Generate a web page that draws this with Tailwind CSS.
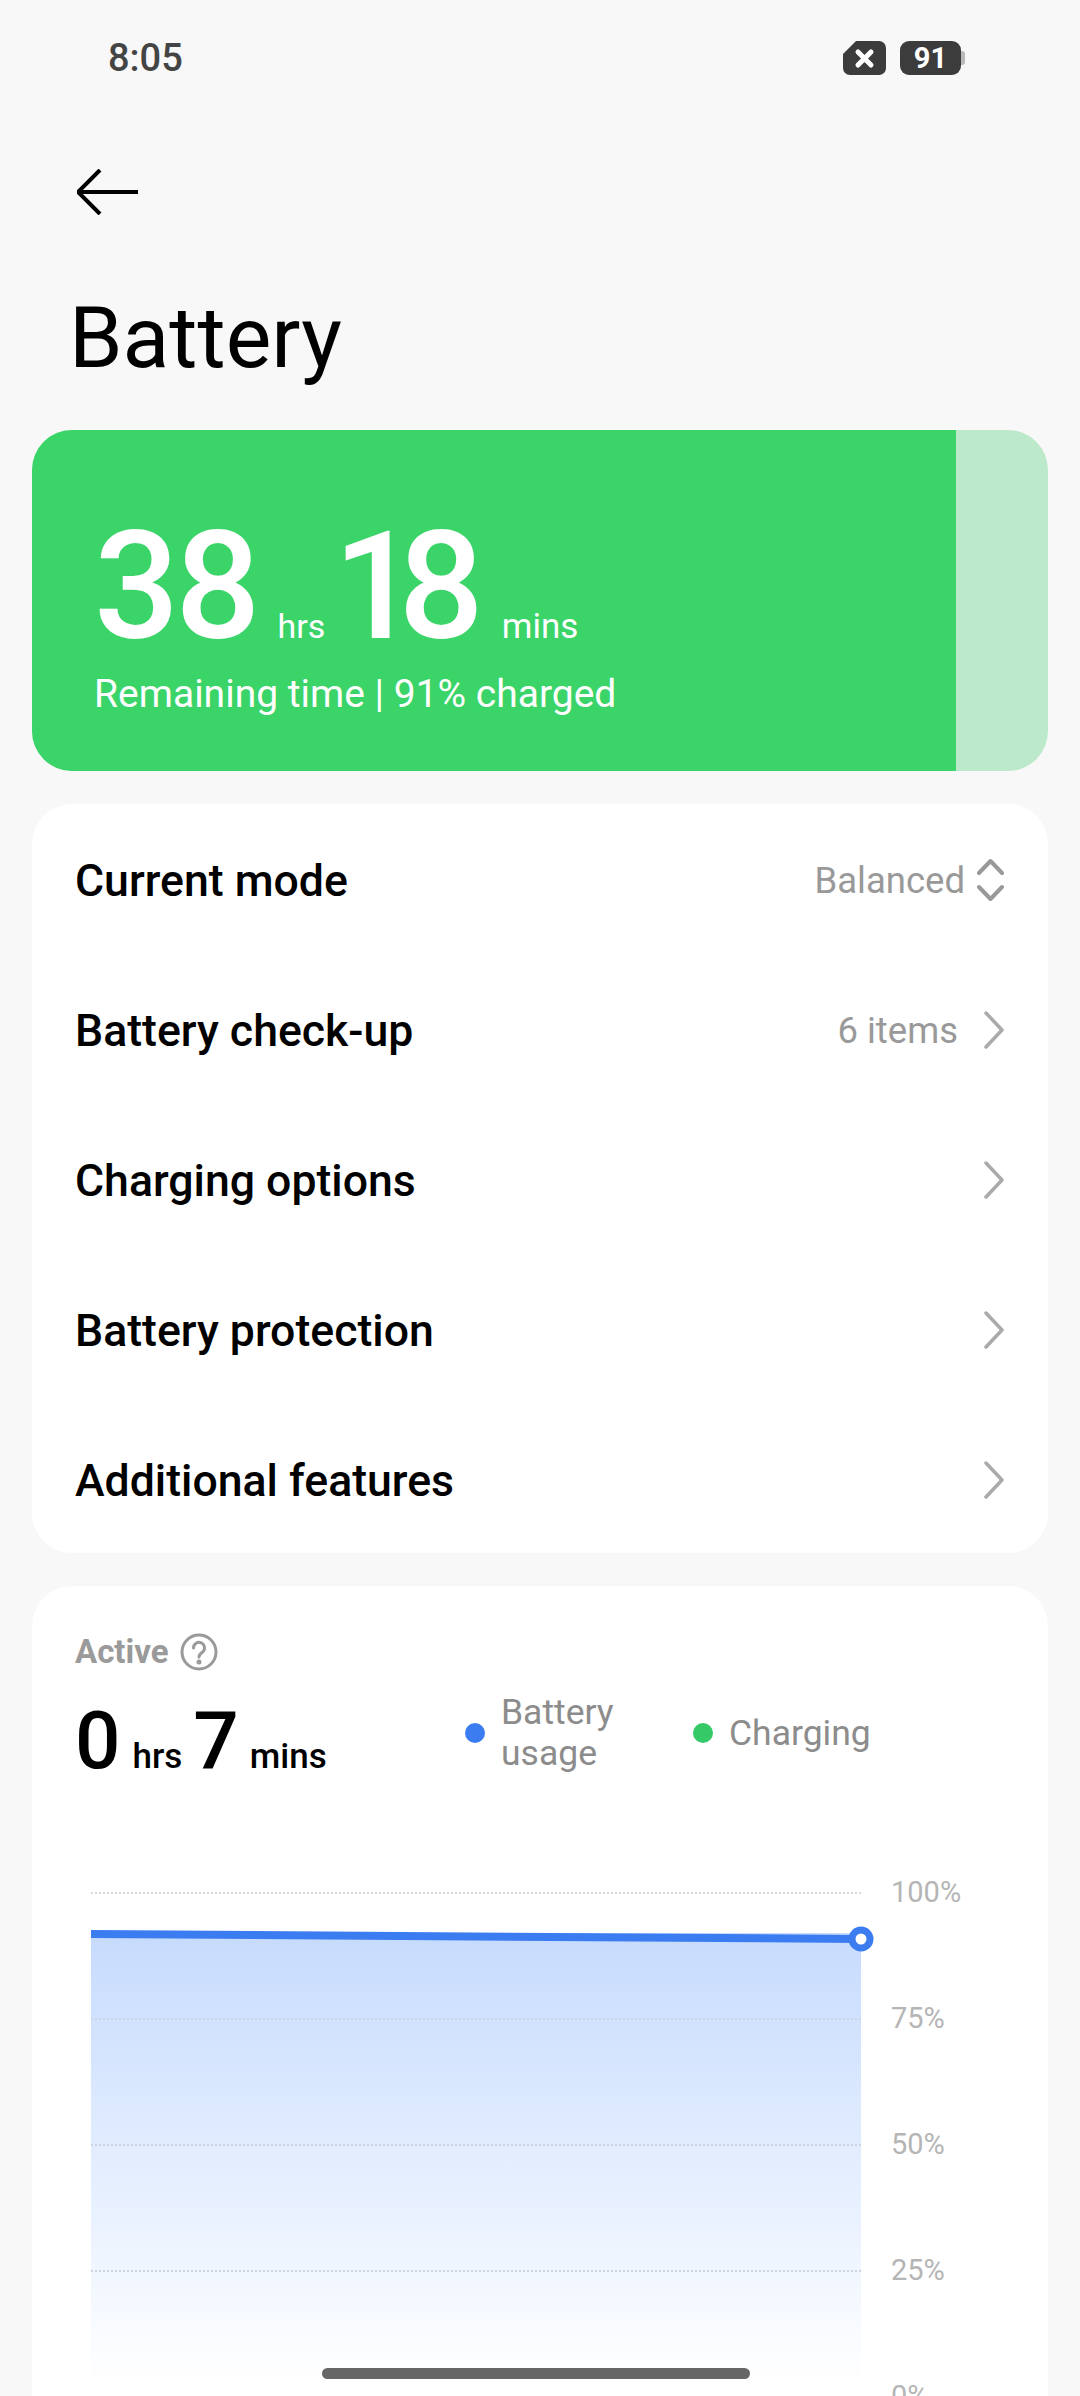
<!DOCTYPE html>
<html><head><meta charset="utf-8"><script src="https://cdn.jsdelivr.net/npm/@tailwindcss/browser@4"></script></head>
<body class="m-0">
<div class="w-[1080px] h-[2396px] overflow-hidden relative bg-[#f8f8f8] font-['Roboto',sans-serif]">
  <div class="h-[116px] flex items-center justify-between pl-[108px] pr-[115px]">
    <span class="text-[38px] leading-[44px] text-[#444] font-medium">8:05</span>
    <div class="flex items-center gap-[14px]">
      <svg class="w-[43px] h-[34px]" viewBox="0 0 43 34"><path d="M13 0H36a7 7 0 0 1 7 7V27a7 7 0 0 1-7 7H7a7 7 0 0 1-7-7V13z" fill="#3c3c3c"/><path d="M15 11L28 24M28 11L15 24" stroke="#fff" stroke-width="5" stroke-linecap="round"/></svg>
      <div class="flex items-center">
        <div class="w-[61px] h-[34px] rounded-[9px] bg-[#3c3c3c] text-white text-[29px] font-bold leading-[34px] text-center">91</div>
        <div class="w-[4px] h-[14px] rounded-r-[3px] bg-[#b9b9b9]"></div>
      </div>
    </div>
  </div>
  <div class="h-[152px] pl-[77px] flex items-center">
    <svg class="w-[62px] h-[46px]" viewBox="0 0 62 46"><path d="M1 23H61M23 1L1 23L23 45" fill="none" stroke="#000" stroke-width="4"/></svg>
  </div>
  <h1 class="h-[162px] pl-[69px] text-[86px] leading-[140px] text-black font-normal">Battery</h1>
  <div class="mx-[32px] h-[341px] rounded-[40px] bg-[#bde9cb] overflow-hidden">
    <div class="w-[924px] h-full bg-[#3ad469] pl-[62px] pt-[83px] text-white">
      <div class="flex items-baseline h-[148px]">
        <span class="text-[150px] leading-[148px] font-medium tracking-[-4px]">38</span>
        <span class="text-[34px] ml-[21px]">hrs</span>
        <span class="text-[150px] leading-[148px] font-medium tracking-[-20px] ml-[8px]">18</span>
        <span class="text-[35px] ml-[38px]">mins</span>
      </div>
      <div class="text-[39px] leading-[48px] mt-[9px]">Remaining time | 91% charged</div>
    </div>
  </div>
  <div class="mx-[32px] mt-[33px] h-[749px] rounded-[40px] bg-white pl-[43px] pr-[44px] pt-[1px] text-black text-[44.6px] font-medium">
    <div class="h-[150px] flex items-center justify-between">
      <span class="pt-[2px]">Current mode</span>
      <div class="flex items-center gap-[12px] text-[36.5px] font-normal text-[#999]"><span class="pt-[2px]">Balanced</span>
        <svg class="w-[27px] h-[44px]" viewBox="0 0 27 44" fill="none" stroke="#999" stroke-width="4" stroke-linecap="round" stroke-linejoin="round"><path d="M2 15L13.5 3L25 15M2 29L13.5 41L25 29"/></svg>
      </div>
    </div>
    <div class="h-[150px] flex items-center justify-between">
      <span class="pt-[2px]">Battery check-up</span>
      <div class="flex items-center gap-[26px] text-[36.5px] font-normal text-[#999]"><span class="pt-[2px]">6 items</span>
        <svg class="w-[20px] h-[38px]" viewBox="0 0 20 38" fill="none" stroke="#aaa" stroke-width="3.5" stroke-linecap="round" stroke-linejoin="round"><path d="M2 2L18 19L2 36"/></svg>
      </div>
    </div>
    <div class="h-[150px] flex items-center justify-between">
      <span class="pt-[2px]">Charging options</span>
      <svg class="w-[20px] h-[38px]" viewBox="0 0 20 38" fill="none" stroke="#aaa" stroke-width="3.5" stroke-linecap="round" stroke-linejoin="round"><path d="M2 2L18 19L2 36"/></svg>
    </div>
    <div class="h-[150px] flex items-center justify-between">
      <span class="pt-[2px]">Battery protection</span>
      <svg class="w-[20px] h-[38px]" viewBox="0 0 20 38" fill="none" stroke="#aaa" stroke-width="3.5" stroke-linecap="round" stroke-linejoin="round"><path d="M2 2L18 19L2 36"/></svg>
    </div>
    <div class="h-[150px] flex items-center justify-between">
      <span class="pt-[2px]">Additional features</span>
      <svg class="w-[20px] h-[38px]" viewBox="0 0 20 38" fill="none" stroke="#aaa" stroke-width="3.5" stroke-linecap="round" stroke-linejoin="round"><path d="M2 2L18 19L2 36"/></svg>
    </div>
  </div>
  <div class="mx-[32px] mt-[33px] h-[900px] rounded-t-[40px] bg-white pl-[43px] pt-[48px]">
    <div class="flex items-center gap-[11px] h-[36px] text-[33px] font-bold text-[#9a9a9a]">
      <span>Active</span>
      <svg class="w-[38px] h-[38px]" viewBox="0 0 38 38" fill="none" stroke="#9a9a9a" stroke-width="3"><circle cx="19" cy="19" r="17"/><path d="M13.5 15a5.5 5.5 0 1 1 8.5 4.5c-2 1.4-3 2.3-3 4.5" stroke-linecap="round"/><circle cx="19" cy="29" r="1" fill="#9a9a9a"/></svg>
    </div>
    <div class="flex mt-[10px] h-[111px]">
      <div class="flex items-baseline w-[390px] pt-[14px] text-black">
        <span class="text-[80px] leading-[94px] font-medium tracking-[-3px]">0</span>
        <span class="text-[35px] font-medium ml-[15px]">hrs</span>
        <span class="text-[80px] leading-[94px] font-medium tracking-[-4px] ml-[11px]">7</span>
        <span class="text-[35px] font-medium ml-[15px]">mins</span>
      </div>
      <div class="flex items-center text-[35.5px] leading-[41px] text-[#8c8c8c] h-[106px]">
        <span class="w-[20px] h-[20px] rounded-full bg-[#3b7cf0] mr-[16px]"></span>
        <span class="w-[192px]">Battery<br>usage</span>
        <span class="w-[20px] h-[20px] rounded-full bg-[#35c968] mr-[16px]"></span>
        <span>Charging</span>
      </div>
    </div>
    <div class="relative mt-[87px] ml-[16px] w-[900px]">
      <div class="absolute left-0 top-[55px] w-[770px] h-[450px] bg-gradient-to-b from-[#c6dbfd] to-white"></div>
      <svg class="absolute left-0 top-0 w-[800px] h-[80px] overflow-visible" viewBox="0 0 800 80"><path d="M0 56L770 61" stroke="#3b7cf0" stroke-width="8" fill="none"/><circle cx="770" cy="61" r="9" fill="#fff" stroke="#3b7cf0" stroke-width="7"/></svg>
      <div class="relative flex flex-col text-[29px] text-[#b5b5b5]">
        <div class="h-[126px] flex items-start"><div class="w-[770px] mt-[14px] border-t-2 border-dotted border-[#d8d8d8]"></div><span class="ml-[30px] leading-[28px]">100%</span></div>
        <div class="h-[126px] flex items-start"><div class="w-[770px] mt-[14px] border-t-2 border-dotted border-[#ccd4e2]"></div><span class="ml-[30px] leading-[28px]">75%</span></div>
        <div class="h-[126px] flex items-start"><div class="w-[770px] mt-[14px] border-t-2 border-dotted border-[#ccd4e2]"></div><span class="ml-[30px] leading-[28px]">50%</span></div>
        <div class="h-[126px] flex items-start"><div class="w-[770px] mt-[14px] border-t-2 border-dotted border-[#ccd4e2]"></div><span class="ml-[30px] leading-[28px]">25%</span></div>
        <div class="h-[40px] flex items-start"><div class="w-[770px]"></div><span class="ml-[30px] leading-[28px]">0%</span></div>
      </div>
    </div>
  </div>
  <div class="absolute left-[322px] top-[2368px] w-[428px] h-[11px] rounded-full bg-[#666]"></div>
</div>
</body></html>
